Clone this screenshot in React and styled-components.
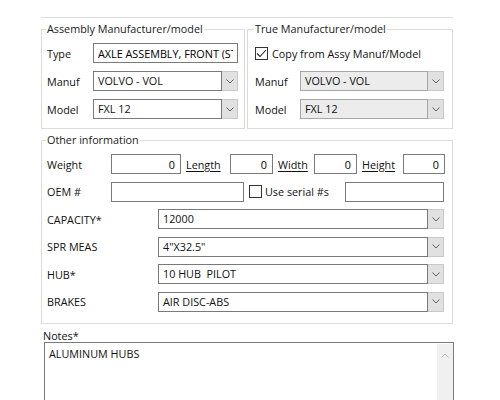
import React from "react";
import styled, { createGlobalStyle } from "styled-components";

const GlobalStyle = createGlobalStyle`
  body {
    margin: 0;
    background: #ffffff;
    font-family: "Open Sans", "Noto Sans", sans-serif;
    font-size: 10.8px;
    color: #111;
  }
`;

const Page = styled.div`
  width: 500px;
  height: 400px;
  overflow: hidden;
  box-sizing: border-box;
  padding: 17px 0 0 41px;
`;

const TopRule = styled.div`
  width: 412px;
  border-top: 1px solid #dcdcdc;
  margin-bottom: 4px;
`;

const GroupRow = styled.div`
  display: flex;
  gap: 2px;
`;

const Group = styled.fieldset`
  margin: ${(p) => p.$mt || 0}px 0 0 0;
  padding: 7px ${(p) => p.$pr}px ${(p) => p.$pb}px ${(p) => p.$pl}px;
  border: 1px solid #dcdcdc;
  width: ${(p) => p.$w}px;
  min-width: 0;
  box-sizing: border-box;
`;

const Legend = styled.legend`
  padding: 0 1px;
  margin-left: -1px;
  line-height: 14px;
  color: #1a1a1a;
`;

const Rows = styled.div`
  display: flex;
  flex-direction: column;
  gap: ${(p) => p.$gap}px;
`;

const Row = styled.div`
  display: flex;
  align-items: center;
  height: 20px;
`;

const Label = styled.span`
  width: ${(p) => p.$w}px;
  flex: none;
  white-space: nowrap;
`;

const LinkLabel = styled.span`
  width: ${(p) => p.$w}px;
  flex: none;
  padding-left: 5px;
  box-sizing: border-box;
  text-decoration: underline;
  text-underline-offset: 2px;
`;

const TextBox = styled.input`
  width: ${(p) => (p.$w ? `${p.$w}px` : "auto")};
  flex: ${(p) => (p.$w ? "none" : 1)};
  min-width: 0;
  height: 20px;
  box-sizing: border-box;
  margin: 0;
  border: 1px solid #7a7a7a;
  background: #fff;
  padding: 0 ${(p) => (p.$num ? 5 : 4)}px 0 4px;
  font: inherit;
  color: #000;
  text-align: ${(p) => (p.$num ? "right" : "left")};
  outline: none;
`;

const Combo = styled.div`
  flex: 1;
  display: flex;
  height: 20px;
`;

const ComboText = styled.div`
  flex: 1;
  box-sizing: border-box;
  border: 1px solid ${(p) => (p.$disabled ? "#a6a6a6" : "#7a7a7a")};
  background: ${(p) => (p.$disabled ? "#ececec" : "#fff")};
  padding-left: 4px;
  line-height: 18px;
  white-space: pre;
  overflow: hidden;
`;

const DropButton = styled.div`
  width: 16px;
  flex: none;
  box-sizing: border-box;
  border: 1px solid #c8c8c8;
  border-left: none;
  background: #e1e1e1;
  display: flex;
  align-items: center;
  justify-content: center;
`;

const CheckWrap = styled.label`
  display: flex;
  align-items: center;
  gap: ${(p) => p.$gap}px;
  margin-left: ${(p) => p.$ml || 0}px;
  white-space: nowrap;
`;

const Box = styled.span`
  width: 13px;
  height: 13px;
  box-sizing: border-box;
  border: 1px solid #333;
  background: #fff;
  display: flex;
  align-items: center;
  justify-content: center;
`;

const Spacer = styled.div`
  flex: 1;
`;

const Notes = styled.div`
  margin-top: 5px;
  padding-left: 2px;
`;

const NotesLabel = styled.div`
  line-height: 13px;
`;

const NotesArea = styled.div`
  margin-left: 1px;
  width: 410px;
  height: 70px;
  box-sizing: border-box;
  border: 1px solid #7a7a7a;
  display: flex;
`;

const NotesText = styled.div`
  flex: 1;
  padding: 3px 4px;
`;

const ScrollBar = styled.div`
  width: 16px;
  margin: 1px 0 0 0;
  background: #f0f0f0;
  display: flex;
  justify-content: center;
  padding-top: 9px;
  box-sizing: border-box;
`;

const Chevron = ({ up }) => (
  <svg width="8" height="5" viewBox="0 0 8 5">
    <polyline
      points={up ? "0.5,4.5 4,1 7.5,4.5" : "0.5,0.5 4,4 7.5,0.5"}
      fill="none"
      stroke={up ? "#b4b4b4" : "#606060"}
      strokeWidth="1"
    />
  </svg>
);

const Check = () => (
  <svg width="11" height="9" viewBox="0 0 11 9">
    <polyline points="1,4.5 4,7.5 10,1" fill="none" stroke="#222" strokeWidth="1.1" />
  </svg>
);

const ComboBox = ({ value, disabled }) => (
  <Combo>
    <ComboText $disabled={disabled}>{value}</ComboText>
    <DropButton>
      <Chevron />
    </DropButton>
  </Combo>
);

const attributes = [
  ["CAPACITY*", "12000"],
  ["SPR MEAS", '4"X32.5"'],
  ["HUB*", "10 HUB  PILOT"],
  ["BRAKES", "AIR DISC-ABS"],
];

export default function App() {
  return (
    <>
      <GlobalStyle />
      <Page>
        <TopRule />
        <GroupRow>
          <Group $w={204} $pl={5} $pr={6} $pb={9}>
            <Legend>Assembly Manufacturer/model</Legend>
            <Rows $gap={8}>
              <Row>
                <Label $w={46}>Type</Label>
                <TextBox readOnly defaultValue="AXLE ASSEMBLY, FRONT (STEER)" />
              </Row>
              <Row>
                <Label $w={46}>Manuf</Label>
                <ComboBox value="VOLVO - VOL" />
              </Row>
              <Row>
                <Label $w={46}>Model</Label>
                <ComboBox value="FXL 12" />
              </Row>
            </Rows>
          </Group>
          <Group $w={206} $pl={7} $pr={8} $pb={9}>
            <Legend>True Manufacturer/model</Legend>
            <Rows $gap={8}>
              <Row>
                <CheckWrap $gap={4}>
                  <Box>
                    <Check />
                  </Box>
                  Copy from Assy Manuf/Model
                </CheckWrap>
              </Row>
              <Row>
                <Label $w={45}>Manuf</Label>
                <ComboBox value="VOLVO - VOL" disabled />
              </Row>
              <Row>
                <Label $w={45}>Model</Label>
                <ComboBox value="FXL 12" disabled />
              </Row>
            </Rows>
          </Group>
        </GroupRow>
        <Group $w={412} $mt={4} $pl={5} $pr={8} $pb={11}>
          <Legend>Other information</Legend>
          <Rows $gap={7.6}>
            <Row>
              <Label $w={64}>Weight</Label>
              <TextBox $w={70} $num readOnly defaultValue="0" />
              <LinkLabel $w={49}>Length</LinkLabel>
              <TextBox $w={43} $num readOnly defaultValue="0" />
              <LinkLabel $w={41}>Width</LinkLabel>
              <TextBox $w={43} $num readOnly defaultValue="0" />
              <LinkLabel $w={46}>Height</LinkLabel>
              <TextBox $w={42} $num readOnly defaultValue="0" />
            </Row>
            <Row>
              <Label $w={64}>OEM #</Label>
              <TextBox $w={133} readOnly defaultValue="" />
              <CheckWrap $gap={3} $ml={5}>
                <Box />
                Use serial #s
              </CheckWrap>
              <Spacer />
              <TextBox $w={99} readOnly defaultValue="" />
            </Row>
            {attributes.map(([label, value]) => (
              <Row key={label}>
                <Label $w={111}>{label}</Label>
                <ComboBox value={value} />
              </Row>
            ))}
          </Rows>
        </Group>
        <Notes>
          <NotesLabel>Notes*</NotesLabel>
          <NotesArea>
            <NotesText>ALUMINUM HUBS</NotesText>
            <ScrollBar>
              <Chevron up />
            </ScrollBar>
          </NotesArea>
        </Notes>
      </Page>
    </>
  );
}
